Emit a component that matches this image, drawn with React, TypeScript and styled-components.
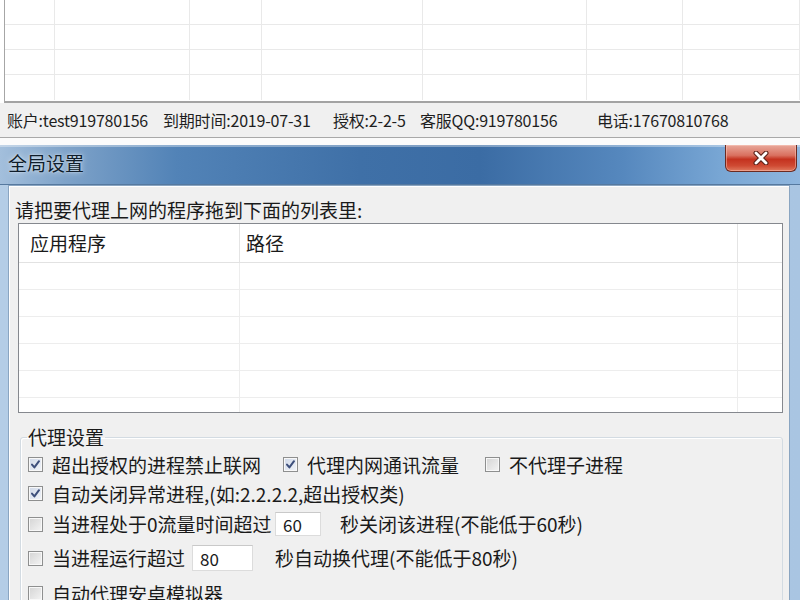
import React from 'react';
import styled, { createGlobalStyle } from 'styled-components';

const GlobalStyle = createGlobalStyle`
  *, *::before, *::after { box-sizing: border-box; }
  html, body { margin: 0; padding: 0; background: #fff; }
  body {
    font-family: "Noto Sans CJK SC", "Noto Sans", sans-serif;
    color: #1a1a1a;
  }
`;

const gridColumns = [50, 135, 72, 161, 164, 96];
const listColumns = '221px 498px 1fr';

const statusItems = [
  { text: '账户:test919780156', w: 156 },
  { text: '到期时间:2019-07-31', w: 170 },
  { text: '授权:2-2-5', w: 87 },
  { text: '客服QQ:919780156', w: 177 },
  { text: '电话:17670810768', w: 180 },
];

const CheckIcon = () => (
  <svg width="11" height="11" viewBox="0 0 11 11">
    <path d="M2 5.6 L4.4 8.4 L9 2.2" fill="none" stroke="#3d4f7c" strokeWidth="2" strokeLinecap="round" strokeLinejoin="round" />
  </svg>
);

const CloseIcon = () => (
  <svg width="16" height="14" viewBox="0 0 16 14">
    <path d="M3 2 L13 12 M13 2 L3 12" stroke="#5b2219" strokeWidth="5" strokeLinecap="round" />
    <path d="M3 2 L13 12 M13 2 L3 12" stroke="#ffffff" strokeWidth="2.8" strokeLinecap="round" />
  </svg>
);

type OptionProps = { checked?: boolean; label: string; width?: number };

const Option = ({ checked, label, width }: OptionProps) => (
  <OptionItem $w={width}>
    <CheckBox $checked={checked}>{checked && <CheckIcon />}</CheckBox>
    <OptionLabel>{label}</OptionLabel>
  </OptionItem>
);

const App = () => {
  return (
    <Page>
      <GlobalStyle />
      <MainWindow>
        <DataGrid>
          {Array.from({ length: 4 }).map((_, r) =>
            Array.from({ length: gridColumns.length + 1 }).map((__, c) => (
              <GridCell key={`${r}-${c}`} $last={r === 3} />
            ))
          )}
        </DataGrid>
        <StatusBar>
          {statusItems.map((item) => (
            <StatusItem key={item.text} $w={item.w}>{item.text}</StatusItem>
          ))}
        </StatusBar>
        <Strip />
      </MainWindow>

      <Dialog>
        <TitleBar>
          <TitleText>全局设置</TitleText>
          <CloseButton><CloseIcon /></CloseButton>
        </TitleBar>
        <DialogBody>
          <Hint>请把要代理上网的程序拖到下面的列表里:</Hint>
          <ListBox>
            <ListHeader>
              <HeaderCell $pad={11}>应用程序</HeaderCell>
              <HeaderCell $pad={6}>路径</HeaderCell>
              <HeaderCell $pad={0} />
            </ListHeader>
            {Array.from({ length: 6 }).map((_, r) => (
              <ListRow key={r} $last={r === 5}>
                <ListCell />
                <ListCell />
                <ListCell />
              </ListRow>
            ))}
          </ListBox>

          <GroupBox>
            <GroupLegend>代理设置</GroupLegend>
            <OptionRow $h={29}>
              <Option checked label="超出授权的进程禁止联网" width={255} />
              <Option checked label="代理内网通讯流量" width={202} />
              <Option label="不代理子进程" />
            </OptionRow>
            <OptionRow $h={29}>
              <Option checked label="自动关闭异常进程,(如:2.2.2.2,超出授权类)" />
            </OptionRow>
            <OptionRow $h={32}>
              <Option label="当进程处于0流量时间超过" width={247} />
              <NumberBox readOnly defaultValue="60" $w={46} $h={24} />
              <Suffix $gap={19}>秒关闭该进程(不能低于60秒)</Suffix>
            </OptionRow>
            <OptionRow $h={36}>
              <Option label="当进程运行超过" width={164} />
              <NumberBox readOnly defaultValue="80" $w={61} $h={26} />
              <Suffix $gap={22}>秒自动换代理(不能低于80秒)</Suffix>
            </OptionRow>
            <OptionRow $h={35}>
              <Option label="自动代理安卓模拟器" />
            </OptionRow>
          </GroupBox>
        </DialogBody>
      </Dialog>
    </Page>
  );
};

const Page = styled.div`
  width: 800px;
  height: 600px;
  overflow: hidden;
  display: flex;
  flex-direction: column;
  background: #fff;
`;

const MainWindow = styled.div`
  height: 145px;
  flex-shrink: 0;
  display: flex;
  flex-direction: column;
  background: #fff;
`;

const DataGrid = styled.div`
  height: 103px;
  flex-shrink: 0;
  margin-left: 4px;
  border-left: 1px solid #a6a6a6;
  border-bottom: 2px solid #a3a3a3;
  display: grid;
  grid-template-columns: ${gridColumns.map((w) => `${w}px`).join(' ')} 1fr;
  grid-template-rows: repeat(4, 25px);
  align-content: start;
  overflow: hidden;
  background: #fff;
`;

const GridCell = styled.div<{ $last?: boolean }>`
  border-right: 1px solid #e9e9e9;
  border-bottom: ${(p) => (p.$last ? 'none' : '1px solid #e9e9e9')};
`;

const StatusBar = styled.div`
  height: 35px;
  flex-shrink: 0;
  display: flex;
  align-items: center;
  padding-left: 7px;
  background: #f0f0f0;
  border-bottom: 1px solid #a9a9a9;
  font-size: 16px;
  color: #1e1e1e;
  white-space: nowrap;
`;

const StatusItem = styled.span<{ $w: number }>`
  width: ${(p) => p.$w}px;
  flex-shrink: 0;
  letter-spacing: -0.2px;
`;

const Strip = styled.div`
  flex: 1;
  background: #fbfbfb;
`;

const Dialog = styled.div`
  flex: 1;
  min-height: 0;
  display: flex;
  flex-direction: column;
  background: linear-gradient(90deg, #b4cde6 0%, #a9c5e2 100%);
`;

const TitleBar = styled.div`
  height: 40px;
  flex-shrink: 0;
  display: flex;
  align-items: flex-start;
  padding-left: 8px;
  background: linear-gradient(90deg, #a3bfdc 0%, #7fa3c9 8%, #5283b7 22%, #3f70a7 45%, #3b6ca4 60%, #5688be 78%, #78a6d4 90%, #8fb6de 100%);
  border-bottom: 1px solid #56799f;
  box-shadow: inset 0 2px 0 rgba(255, 255, 255, 0.35);
`;

const TitleText = styled.div`
  margin-top: 5px;
  font-size: 19px;
  line-height: 26px;
  color: #0f1d2b;
  text-shadow: 0 0 6px rgba(255, 255, 255, 0.7), 0 0 2px rgba(255, 255, 255, 0.6);
`;

const CloseButton = styled.div`
  margin-left: auto;
  margin-right: 3px;
  width: 72px;
  height: 27px;
  display: flex;
  align-items: center;
  justify-content: center;
  border: 1px solid #6b2a21;
  border-top: none;
  border-radius: 0 0 6px 6px;
  background: linear-gradient(180deg, #e9a99b 0%, #d9705f 40%, #c4321f 55%, #cf4a33 80%, #e07a5f 100%);
  box-shadow: inset 0 0 0 1px rgba(255, 210, 200, 0.45);
`;

const DialogBody = styled.div`
  flex: 1;
  min-height: 0;
  margin: 0 10px 0 8px;
  padding: 11px 6px 0 6px;
  display: flex;
  flex-direction: column;
  background: #f0f0f0;
  border: 1px solid #8aa5c1;
  border-bottom: none;
  box-shadow: inset 1px 1px 0 #ffffff;
`;

const Hint = styled.div`
  flex-shrink: 0;
  font-size: 19px;
  line-height: 26px;
  white-space: nowrap;
`;

const ListBox = styled.div`
  height: 190px;
  flex-shrink: 0;
  margin-left: 3px;
  display: flex;
  flex-direction: column;
  background: #fff;
  border: 1px solid #85888e;
  overflow: hidden;
`;

const ListHeader = styled.div`
  height: 39px;
  flex-shrink: 0;
  display: grid;
  grid-template-columns: ${listColumns};
  border-bottom: 1px solid #e2e2e2;
`;

const HeaderCell = styled.div<{ $pad: number }>`
  padding: 4px 0 0 ${(p) => p.$pad}px;
  font-size: 19px;
  line-height: 30px;
  border-right: 1px solid #e4e4e4;
  &:last-child { border-right: none; }
`;

const ListRow = styled.div<{ $last?: boolean }>`
  height: 27px;
  flex-shrink: 0;
  display: grid;
  grid-template-columns: ${listColumns};
  border-bottom: ${(p) => (p.$last ? 'none' : '1px solid #ededed')};
`;

const ListCell = styled.div`
  border-right: 1px solid #ededed;
  &:last-child { border-right: none; }
`;

const GroupBox = styled.fieldset`
  flex-shrink: 0;
  margin: 13px 0 0 5px;
  padding: 2px 6px 0 6px;
  border: 1px solid #d3dbe2;
  border-radius: 3px;
  box-shadow: inset 1px 1px 0 #fff;
  min-width: 0;
`;

const GroupLegend = styled.legend`
  padding: 0 1px;
  font-size: 19px;
  line-height: 22px;
`;

const OptionRow = styled.div<{ $h: number }>`
  height: ${(p) => p.$h}px;
  display: flex;
  align-items: center;
  padding-left: 1px;
  white-space: nowrap;
`;

const OptionItem = styled.div<{ $w?: number }>`
  display: flex;
  align-items: center;
  gap: 9px;
  flex-shrink: 0;
  ${(p) => (p.$w ? `width: ${p.$w}px;` : '')}
`;

const CheckBox = styled.span<{ $checked?: boolean }>`
  width: 15px;
  height: 15px;
  flex-shrink: 0;
  display: flex;
  align-items: center;
  justify-content: center;
  border: 1px solid #8e8f8f;
  background: ${(p) =>
    p.$checked
      ? 'linear-gradient(135deg, #cfd8e8 0%, #f2f5fa 100%)'
      : 'linear-gradient(135deg, #d4d4d4 0%, #f4f4f4 100%)'};
  box-shadow: inset 0 0 0 1px #f8f8f8;
`;

const OptionLabel = styled.span`
  font-size: 19px;
  line-height: 24px;
`;

const NumberBox = styled.input<{ $w: number; $h: number }>`
  width: ${(p) => p.$w}px;
  height: ${(p) => p.$h}px;
  flex-shrink: 0;
  margin: 0;
  padding: 0 0 0 7px;
  border: 1px solid #dcdcdc;
  border-top-color: #c9c9c9;
  background: #fff;
  font-family: "Noto Sans CJK SC", "Noto Sans", sans-serif;
  font-size: 17px;
  color: #1a1a1a;
  outline: none;
`;

const Suffix = styled.span<{ $gap: number }>`
  margin-left: ${(p) => p.$gap}px;
  font-size: 19px;
  line-height: 24px;
`;

export default App;
